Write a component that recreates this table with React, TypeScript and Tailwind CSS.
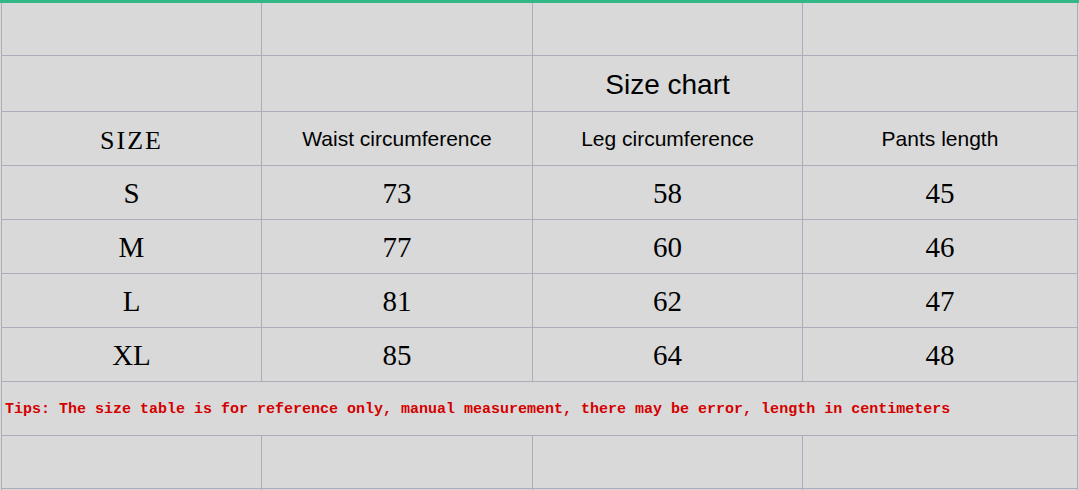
import React from "react";

const rows = [
  ["S", "73", "58", "45"],
  ["M", "77", "60", "46"],
  ["L", "81", "62", "47"],
  ["XL", "85", "64", "48"],
];

function Cell({ children, h, className = "" }: { children?: React.ReactNode; h: string; className?: string }) {
  return (
    <div className={`flex items-center justify-center border-r border-b border-[#acacbb] ${h} ${className}`}>
      {children}
    </div>
  );
}

export default function App() {
  return (
    <div className="w-[1079px] h-[490px] overflow-hidden bg-[#d9d9d9] text-black">
      <div className="h-[3px] bg-[#33b888]" />
      <div className="ml-px grid grid-cols-[260px_271px_270px_275px] border-l border-[#acacbb]">
        <Cell h="h-[53px]" />
        <Cell h="h-[53px]" />
        <Cell h="h-[53px]" />
        <Cell h="h-[53px]" />

        <Cell h="h-[56px]" />
        <Cell h="h-[56px]" />
        <Cell h="h-[56px]">
          <span className="font-['Liberation_Sans',Arial,sans-serif] text-[28px] pt-[3px]">Size chart</span>
        </Cell>
        <Cell h="h-[56px]" />

        <Cell h="h-[54px]">
          <span className="font-['Liberation_Serif','Times_New_Roman',serif] text-[26px] tracking-[2px] pt-[4px]">SIZE</span>
        </Cell>
        <Cell h="h-[54px]">
          <span className="font-['Liberation_Sans',Arial,sans-serif] text-[21px]">Waist circumference</span>
        </Cell>
        <Cell h="h-[54px]">
          <span className="font-['Liberation_Sans',Arial,sans-serif] text-[21px]">Leg circumference</span>
        </Cell>
        <Cell h="h-[54px]">
          <span className="font-['Liberation_Sans',Arial,sans-serif] text-[21px]">Pants length</span>
        </Cell>

        {rows.map((r) =>
          r.map((v, i) => (
            <Cell key={r[0] + i} h="h-[54px]">
              <span className="font-['Liberation_Serif','Times_New_Roman',serif] text-[29px] pt-[3px]">{v}</span>
            </Cell>
          ))
        )}

        <div className="col-span-4 flex h-[54px] items-center border-r border-b border-[#acacbb] pl-[3px] pt-[4px]">
          <span className="font-['Liberation_Mono','Courier_New',monospace] text-[15px] font-bold text-[#d40000] whitespace-nowrap">
            Tips: The size table is for reference only, manual measurement, there may be error, length in centimeters
          </span>
        </div>

        <Cell h="h-[53px]" />
        <Cell h="h-[53px]" />
        <Cell h="h-[53px]" />
        <Cell h="h-[53px]" />

        <Cell h="h-[20px]" />
        <Cell h="h-[20px]" />
        <Cell h="h-[20px]" />
        <Cell h="h-[20px]" />
      </div>
    </div>
  );
}
